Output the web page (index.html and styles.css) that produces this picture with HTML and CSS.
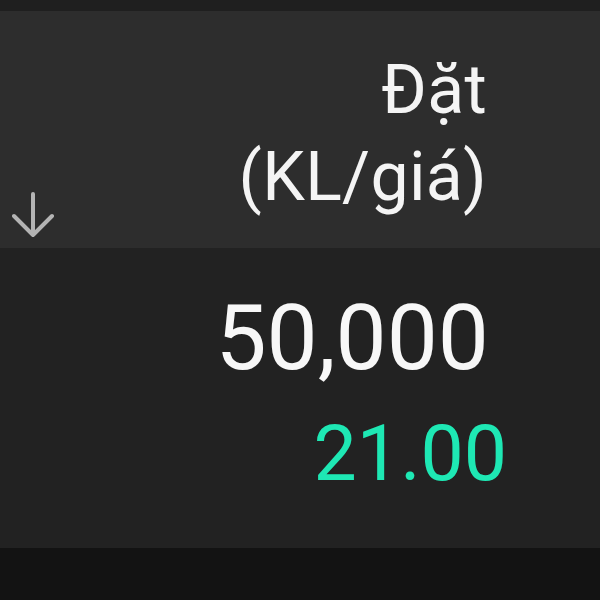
FILE: index.html
```html
<!DOCTYPE html>
<html lang="vi">
<head>
<meta charset="utf-8">
<title>Đặt</title>
<link rel="stylesheet" href="styles.css">
</head>
<body>
<div class="screen">
  <div class="top-strip"></div>
  <div class="header">
    <svg class="sort-icon" width="48" height="48" viewBox="0 0 48 48" aria-hidden="true">
      <path d="M21 4 V45 M2 26 L21 45 L40 26" fill="none" stroke="#b4b4b4" stroke-width="4" stroke-linecap="round" stroke-linejoin="round"/>
    </svg>
    <div class="header-title">Đặt<br>(KL/giá)</div>
  </div>
  <div class="row">
    <div class="qty">50,000</div>
    <div class="price">21.00</div>
  </div>
  <div class="bottom"></div>
</div>
</body>
</html>
```
FILE: styles.css
```css
html, body {
  margin: 0;
  padding: 0;
  background: #121212;
}
.screen {
  width: 600px;
  height: 600px;
  display: flex;
  flex-direction: column;
  font-family: Roboto, "Noto Sans", sans-serif;
  overflow: hidden;
}
.top-strip {
  height: 11px;
  background: #1f1f1f;
}
.header {
  height: 237px;
  box-sizing: border-box;
  background: #2d2d2d;
  display: flex;
  align-items: flex-end;
  padding: 36px 113px 10px 12px;
}
.sort-icon {
  display: block;
}
.header-title {
  margin-left: auto;
  margin-bottom: 17px;
  text-align: right;
  color: #f4f4f4;
  font-size: 68px;
  line-height: 87px;
  letter-spacing: 0.3px;
}
.row {
  height: 300px;
  box-sizing: border-box;
  background: #222222;
  display: flex;
  flex-direction: column;
  align-items: flex-end;
  padding-top: 40px;
}
.qty {
  color: #f7f7f7;
  font-size: 91px;
  line-height: 100px;
  margin-right: 111px;
}
.price {
  color: #1ee8b4;
  font-size: 77px;
  line-height: 90px;
  margin-top: 21px;
  margin-right: 93px;
}
.bottom {
  flex: 1;
  background: #131313;
}
```
